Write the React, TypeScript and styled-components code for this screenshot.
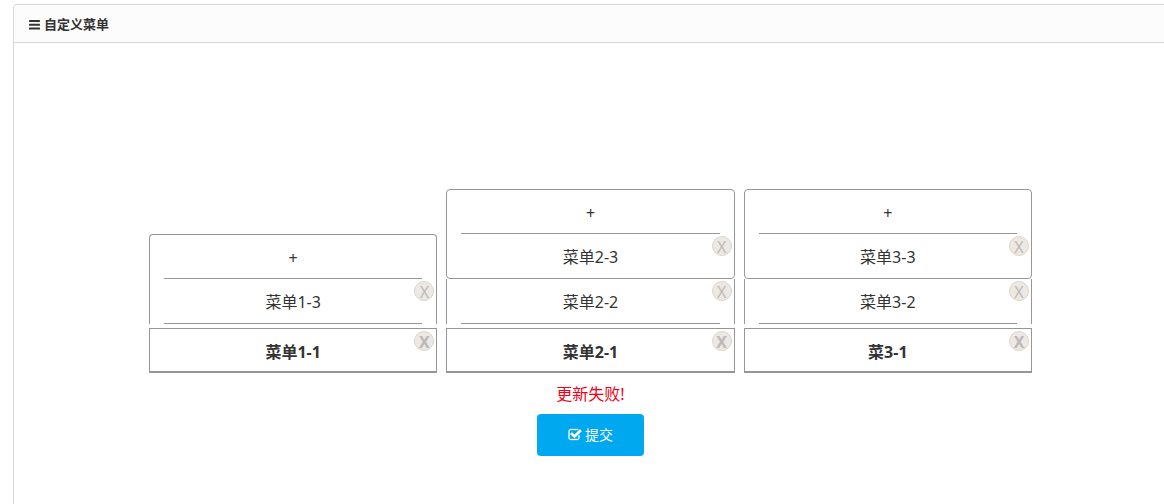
import React from 'react';
import styled, { createGlobalStyle, css } from 'styled-components';

const line = '#969696';

const GlobalStyle = createGlobalStyle`
  *, *::before, *::after { box-sizing: border-box; }
  body {
    margin: 0;
    overflow-x: hidden;
    background: #fff;
    color: #333;
    font-family: "Noto Sans", "Noto Sans CJK SC", sans-serif;
    font-size: 16px;
  }
`;

const Panel = styled.section`
  margin: 4px -4px 0 13px;
  min-height: calc(100vh - 4px);
  border: 1px solid #d8d8d8;
  border-bottom: 0;
  border-radius: 4px 4px 0 0;
`;

const PanelHeader = styled.header`
  display: flex;
  align-items: center;
  gap: 3px;
  height: 38px;
  padding: 0 14px;
  border-bottom: 1px solid #d8d8d8;
  border-radius: 4px 4px 0 0;
  background: #fcfcfc;
`;

const PanelTitle = styled.h1`
  margin: 0;
  font-size: 13px;
  line-height: 20px;
  font-weight: 700;
`;

const PanelBody = styled.form`
  display: flex;
  flex-direction: column;
  align-items: center;
  padding: 146px 15px 48px;
`;

const MenuGrid = styled.div`
  display: grid;
  grid-template-columns: repeat(3, 1fr);
  align-items: end;
  gap: 9px;
  width: 100%;
  max-width: 883px;
`;

const MenuColumn = styled.div`
  display: flex;
  flex-direction: column;
`;

const SubMenu = styled.ul<{ $closed?: boolean }>`
  margin: 0;
  padding: 0;
  list-style: none;
  border: 1px solid ${line};
  border-bottom-width: ${p => (p.$closed ? '1px' : '0')};
  border-radius: ${p => (p.$closed ? '4px' : '4px 4px 0 0')};
`;

const LooseItems = styled.ul`
  margin: 0;
  padding: 0;
  list-style: none;
  border: solid ${line};
  border-width: 0 1px;
`;

const Item = styled.li<{ $divided?: boolean; $first?: boolean }>`
  position: relative;
  display: flex;
  height: ${p => (p.$divided && !p.$first ? '45px' : '44px')};
  padding: 0 15px ${p => (p.$divided && !p.$first ? '1px' : '0')};
  ${p => p.$divided && css`
    &::after {
      content: '';
      position: absolute;
      right: 14px;
      bottom: 0;
      left: 14px;
      border-bottom: 1px solid ${line};
    }
  `}
`;

const MainItem = styled.div`
  position: relative;
  display: flex;
  height: 45px;
  margin-top: 4px;
  padding: 0 15px;
  border: 1px solid ${line};
  border-bottom-width: 2px;
  font-weight: 700;
`;

const ItemButton = styled.button<{ $strong?: boolean }>`
  flex: 1;
  padding: ${p => (p.$strong ? '4px' : '2px')} 0 0;
  border: 0;
  background: none;
  color: inherit;
  font: inherit;
  line-height: 24px;
  cursor: pointer;
`;

const RemoveButton = styled.button`
  position: absolute;
  top: 2px;
  right: 2px;
  width: 20px;
  height: 20px;
  padding: 0;
  border: 1px solid #ddd5ca;
  border-radius: 50%;
  background: #ece8e3;
  color: #bfb8b8;
  font: inherit;
  line-height: 20px;
  cursor: pointer;
`;

const Message = styled.p`
  margin: 9px 0 8px;
  color: #f00014;
  line-height: 24px;
`;

const SubmitButton = styled.button`
  display: flex;
  align-items: center;
  justify-content: center;
  gap: 3px;
  height: 42px;
  padding: 0 31px;
  border: 0;
  border-radius: 4px;
  background: #00a8f0;
  color: #fff;
  font: inherit;
  font-size: 14px;
  line-height: 20px;
  cursor: pointer;
`;

const Icon = styled.svg<{ $size: number }>`
  width: ${p => p.$size}px;
  height: ${p => p.$size}px;
  fill: currentColor;
`;

const BarsIcon = () => (
  <Icon $size={13} viewBox="0 0 13 13" aria-hidden="true">
    <rect x="1" y="3" width="11" height="2" rx="0.4" />
    <rect x="1" y="6.8" width="11" height="2" rx="0.4" />
    <rect x="1" y="10.6" width="11" height="2" rx="0.4" />
  </Icon>
);

const CheckIcon = () => (
  <Icon $size={14} viewBox="0 0 1792 1792" stroke="currentColor" strokeWidth="40" aria-hidden="true">
    <path d="M1472 930v318q0 119-84.5 203.5t-203.5 84.5h-832q-119 0-203.5-84.5t-84.5-203.5v-832q0-119 84.5-203.5t203.5-84.5h832q63 0 117 25 15 7 18 23 3 17-9 29l-49 49q-10 10-23 10-3 0-9-2-23-6-45-6h-832q-66 0-113 47t-47 113v832q0 66 47 113t113 47h832q66 0 113-47t47-113v-254q0-13 9-22l64-64q10-10 23-10 6 0 12 3 20 8 20 29zm231-489l-814 814q-24 24-57 24t-57-24l-430-430q-24-24-24-57t24-57l110-110q24-24 57-24t57 24l263 263 647-647q24-24 57-24t57 24l110 110q24 24 24 57t-24 57z" />
  </Icon>
);

interface Menu {
  main: string;
  boxed: string[];
  loose: string[];
}

const menus: Menu[] = [
  { main: '菜单1-1', boxed: ['菜单1-3'], loose: [] },
  { main: '菜单2-1', boxed: ['菜单2-3'], loose: ['菜单2-2'] },
  { main: '菜3-1', boxed: ['菜单3-3'], loose: ['菜单3-2'] },
];

function MenuItem({ label, divided }: { label: string; divided: boolean }) {
  return (
    <Item $divided={divided}>
      <ItemButton type="button">{label}</ItemButton>
      <RemoveButton type="button">X</RemoveButton>
    </Item>
  );
}

export default function App() {
  return (
    <>
      <GlobalStyle />
      <Panel>
        <PanelHeader>
          <BarsIcon />
          <PanelTitle>自定义菜单</PanelTitle>
        </PanelHeader>
        <PanelBody onSubmit={e => e.preventDefault()}>
          <MenuGrid>
            {menus.map(menu => {
              const closed = menu.loose.length > 0;
              return (
                <MenuColumn key={menu.main}>
                  <SubMenu $closed={closed}>
                    <Item $divided $first>
                      <ItemButton type="button">+</ItemButton>
                    </Item>
                    {menu.boxed.map(label => (
                      <MenuItem key={label} label={label} divided={!closed} />
                    ))}
                  </SubMenu>
                  {closed && (
                    <LooseItems>
                      {menu.loose.map(label => (
                        <MenuItem key={label} label={label} divided />
                      ))}
                    </LooseItems>
                  )}
                  <MainItem>
                    <ItemButton type="button" $strong>{menu.main}</ItemButton>
                    <RemoveButton type="button">X</RemoveButton>
                  </MainItem>
                </MenuColumn>
              );
            })}
          </MenuGrid>
          <Message role="status">更新失败!</Message>
          <SubmitButton type="submit">
            <CheckIcon />
            提交
          </SubmitButton>
        </PanelBody>
      </Panel>
    </>
  );
}
